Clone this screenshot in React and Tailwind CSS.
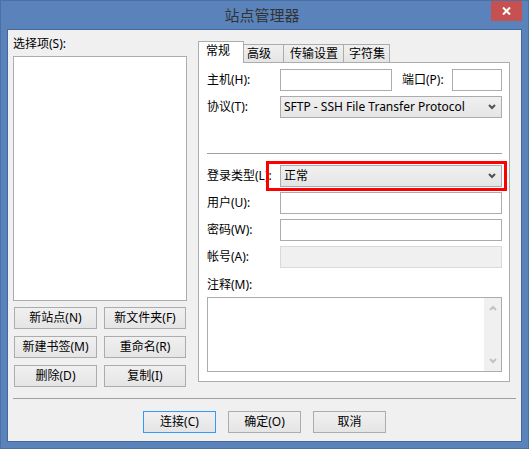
import React from "react";

const font = "font-['Noto_Sans','Noto_Sans_CJK_SC',sans-serif]";

const Chevron = ({ up = false, color = "#505050" }) => (
  <svg width="8" height="6" viewBox="0 0 8 6" className="block">
    <path
      d={up ? "M1 5l3-3 3 3" : "M1 1l3 3 3-3"}
      fill="none"
      stroke={color}
      strokeWidth="2"
    />
  </svg>
);

const Button = ({ children, className = "", primary = false }) => (
  <div
    className={`flex items-center justify-center h-[22px] border bg-linear-to-b from-[#f0f0f0] to-[#e5e5e5] text-[12px] leading-[20px] text-black ${
      primary ? "border-[#3399ff]" : "border-[#acacac]"
    } ${className}`}
  >
    {children}
  </div>
);

const Input = ({ className = "", disabled = false }) => (
  <div
    className={`h-[22px] border ${
      disabled ? "border-[#d9d9d9] bg-[#f0f0f0]" : "border-[#acacac] bg-white"
    } ${className}`}
  ></div>
);

const Select = ({ value }) => (
  <div className="flex items-center justify-between h-[22px] w-[222px] border border-[#acacac] bg-linear-to-b from-[#f0f0f0] to-[#e5e5e5] pl-[3px] pr-[5px]">
    <span className="text-[12px] leading-[20px] whitespace-nowrap">{value}</span>
    <Chevron />
  </div>
);

const Row = ({ label, children, className = "" }) => (
  <div className={`flex h-[22px] ${className}`}>
    <div className="w-[73px] text-[12px] leading-[22px] whitespace-nowrap">{label}</div>
    {children}
  </div>
);

export default function App() {
  return (
    <div className={`relative flex flex-col w-[529px] h-[449px] bg-[#5a83bb] border border-[#4a70a6] px-[6px] pb-[6px] ${font}`}>
      {/* title bar */}
      <div className="flex items-center justify-center h-[28px] pr-[5px] text-[15px] text-[#333333]">
        站点管理器
      </div>
      <div className="absolute top-0 right-[6px] flex items-center justify-center w-[31px] h-[20px] bg-[#c75050]">
        <svg width="9" height="8" viewBox="0 0 9 8">
          <path d="M1 0.5l7 7M8 0.5l-7 7" stroke="#ffffff" strokeWidth="2" />
        </svg>
      </div>

      {/* client area */}
      <div className="flex flex-col h-[413px] bg-[#f0f0f0] border border-[#44689e] text-black">
        <div className="flex px-[5px] h-[357px]">
          {/* left column */}
          <div className="flex flex-col w-[174px]">
            <div className="mt-[6px] h-[16px] text-[12px] leading-[16px]">选择项(S):</div>
            <div className="mt-[4px] h-[245px] border border-[#acacac] bg-white"></div>
            <div className="mt-[6px] ml-[1px] grid grid-cols-[83px_82px] gap-x-[7px] gap-y-[7px]">
              <Button>新站点(N)</Button>
              <Button>新文件夹(F)</Button>
              <Button>新建书签(M)</Button>
              <Button>重命名(R)</Button>
              <Button>删除(D)</Button>
              <Button>复制(I)</Button>
            </div>
          </div>

          {/* right column: tabs */}
          <div className="ml-[11px] mt-[11px] w-[312px] flex flex-col">
            <div className="relative z-10 flex items-end h-[21px] text-[12px]">
              <div className="w-[46px] h-[22px] -mb-px bg-white border border-b-0 border-[#acacac] pl-[7px] leading-[17px]">
                常规
              </div>
              <div className="w-[40px] h-[18px] border-t border-r border-[#acacac] bg-linear-to-b from-[#f0f0f0] to-[#e5e5e5] pl-[3px] leading-[18px]">
                高级
              </div>
              <div className="w-[60px] h-[18px] border-t border-r border-[#acacac] bg-linear-to-b from-[#f0f0f0] to-[#e5e5e5] pl-[6px] leading-[18px]">
                传输设置
              </div>
              <div className="w-[46px] h-[18px] border-t border-r border-[#acacac] bg-linear-to-b from-[#f0f0f0] to-[#e5e5e5] pl-[5px] leading-[18px]">
                字符集
              </div>
            </div>
            <div className="flex flex-col h-[320px] border border-[#acacac] bg-white pt-[6px] pl-[8px] pr-[7px]">
              <div className="flex h-[22px]">
                <div className="w-[73px] text-[12px] leading-[22px]">主机(H):</div>
                <Input className="w-[112px]" />
                <div className="ml-[10px] w-[50px] text-[12px] leading-[22px] whitespace-nowrap">端口(P):</div>
                <Input className="w-[50px]" />
              </div>
              <Row label="协议(T):" className="mt-[5px]">
                <Select value="SFTP - SSH File Transfer Protocol" />
              </Row>
              <div className="mt-[35px] h-px bg-[#a0a0a0]"></div>
              <Row label="登录类型(L):" className="mt-[11px]">
                <div className="relative">
                  <Select value="正常" />
                  <div className="absolute -left-[14px] -right-[5px] -top-[4px] -bottom-[4px] border-[3px] border-[#ff0000]"></div>
                </div>
              </Row>
              <Row label="用户(U):" className="mt-[5px]">
                <Input className="w-[222px]" />
              </Row>
              <Row label="密码(W):" className="mt-[5px]">
                <Input className="w-[222px]" />
              </Row>
              <Row label="帐号(A):" className="mt-[5px]">
                <Input className="w-[222px]" disabled />
              </Row>
              <div className="mt-[9px] h-[16px] text-[12px] leading-[16px]">注释(M):</div>
              <div className="mt-[4px] flex justify-end h-[75px] border border-[#acacac] bg-white">
                <div className="flex flex-col items-center justify-between w-[17px] bg-[#f0f0f0] py-[7px]">
                  <Chevron up color="#c2c2c2" />
                  <Chevron color="#c2c2c2" />
                </div>
              </div>
            </div>
          </div>
        </div>

        <div className="mt-[11px] mx-[5px] h-px bg-[#a0a0a0]"></div>

        <div className="mt-[12px] flex justify-center gap-[12px]">
          <Button primary className="w-[73px]">连接(C)</Button>
          <Button className="w-[73px]">确定(O)</Button>
          <Button className="w-[73px]">取消</Button>
        </div>
      </div>
    </div>
  );
}
